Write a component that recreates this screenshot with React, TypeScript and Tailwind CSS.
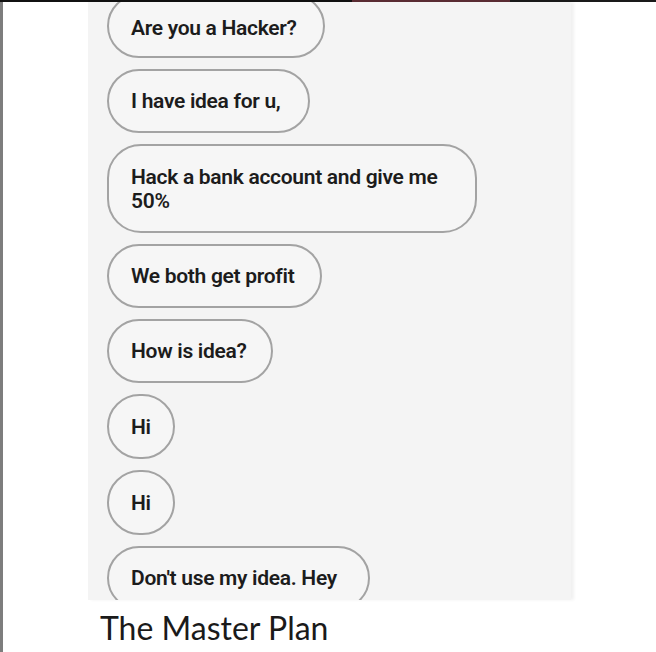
const bubbles = [
  { t: "Are you a Hacker?", w: "w-[218px]" },
  { t: "I have idea for u,", w: "w-[203px]" },
  { t: "Hack a bank account and give me\n50%", w: "w-[370px]" },
  { t: "We both get profit", w: "w-[215px]" },
  { t: "How is idea?", w: "w-[166px]" },
  { t: "Hi", w: "w-[68px]" },
  { t: "Hi", w: "w-[68px]" },
  { t: "Don't use my idea. Hey", w: "w-[263px]" },
];

export default function App() {
  return (
    <div className="w-[656px] h-[652px] bg-white flex flex-col overflow-hidden">
      {/* top strip from the cropped screenshot */}
      <div className="flex h-[2px] shrink-0">
        <div className="w-[352px] bg-[#111]" />
        <div className="w-[158px] bg-[#5b2c33]" />
        <div className="flex-1 bg-[#1a1a1a]" />
      </div>
      <div className="flex flex-1">
        <div className="w-[3px] bg-[#7d7d7d]" />
        <div className="flex flex-col pl-[85px]">
          <div className="w-[483px] h-[598px] bg-[#f4f4f4] overflow-hidden flex flex-col gap-[11px] pl-[19px] shadow-[3px_0_3px_rgba(0,0,0,0.06)]">
            {bubbles.map((b, i) => (
              <div
                key={i}
                className={`${b.w} self-start shrink-0 flex items-center border-2 border-[#a3a3a3] bg-[#f6f6f6] text-[#1c1c1c] font-semibold text-[21px] leading-[24px] tracking-[-0.3px] whitespace-pre-line pl-[22px] ${
                  i === 0 ? "-mt-[8px] pt-[4px]" : ""
                } ${i === 2 ? "h-[89px] rounded-[34px]" : b.t === "Hi" ? "h-[65px] rounded-full" : "h-[64px] rounded-full"}`}
                style={{ fontFamily: "Roboto, 'Liberation Sans', sans-serif" }}
              >
                {b.t}
              </div>
            ))}
          </div>
          <div
            className="pl-[12px] pt-[10px] text-[32px] leading-[36px] text-[#1a1a1a]"
            style={{ fontFamily: "Lato, 'Open Sans', sans-serif" }}
          >
            The Master Plan
          </div>
        </div>
      </div>
    </div>
  );
}
